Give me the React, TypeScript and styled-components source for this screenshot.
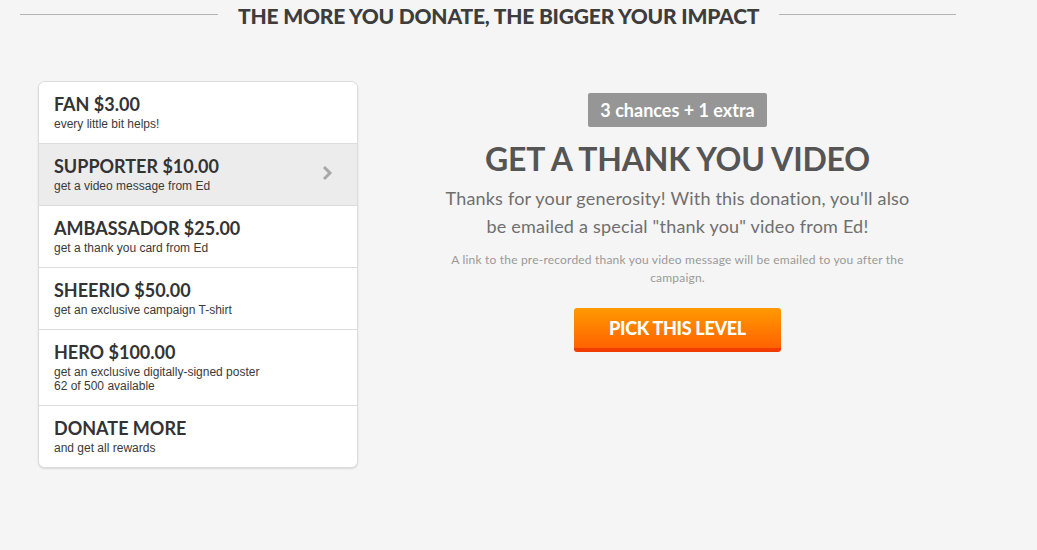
import React from "react";
import styled, { createGlobalStyle } from "styled-components";

const Global = createGlobalStyle`
  html, body { margin: 0; padding: 0; background: #f5f5f5; }
  body { font-family: Lato, "Open Sans", sans-serif; color: #444; }
`;

const Page = styled.div`
  width: 1037px;
  height: 550px;
  background: #f5f5f5;
  box-sizing: border-box;
`;

const HeaderRow = styled.div`
  display: flex;
  align-items: center;
  height: 30px;
  padding-left: 20px;
  gap: 20px;
`;

const Rule = styled.div<{ $w: number }>`
  width: ${(p) => p.$w}px;
  height: 1px;
  background: #b4b4b4;
  margin-top: -2px;
`;

const HeaderTitle = styled.h2`
  margin: 0;
  font-family: Lato, sans-serif;
  font-weight: 900;
  font-size: 21px;
  letter-spacing: -0.2px;
  color: #3d3d3d;
  white-space: nowrap;
`;

const Content = styled.div`
  display: flex;
  gap: 40px;
  padding-left: 38px;
  margin-top: 51px;
  align-items: flex-start;
`;

const Card = styled.div`
  width: 320px;
  box-sizing: border-box;
  background: #fff;
  border: 1px solid #dcdcdc;
  border-radius: 7px;
  box-shadow: 0 1px 2px rgba(0, 0, 0, 0.12);
  overflow: hidden;
`;

const Row = styled.div<{ $active?: boolean }>`
  display: flex;
  align-items: center;
  padding: 11px 16px 12px 15px;
  background: ${(p) => (p.$active ? "#ececec" : "#fff")};
  border-bottom: 1px solid #dcdcdc;
  &:last-child { border-bottom: none; }
`;

const RowText = styled.div`
  flex: 1;
  display: flex;
  flex-direction: column;
  gap: 2px;
`;

const RowTitle = styled.div`
  font-family: Lato, sans-serif;
  font-weight: 700;
  font-size: 18px;
  line-height: 22px;
  color: #333;
`;

const RowSub = styled.div`
  font-family: "Liberation Sans", Arial, sans-serif;
  font-size: 12px;
  line-height: 14px;
  color: #3a3a3a;
`;

const Chevron = styled.svg`
  width: 12px;
  height: 16px;
  margin-right: 8px;
  margin-top: -2px;
`;

const Detail = styled.div`
  width: 559px;
  display: flex;
  flex-direction: column;
  align-items: center;
  text-align: center;
  padding-top: 12px;
`;

const Badge = styled.div`
  background: #969696;
  color: #fff;
  border-radius: 2px;
  height: 34px;
  padding: 0 12px;
  display: flex;
  align-items: center;
  font-family: Lato, sans-serif;
  font-weight: 700;
  font-size: 18px;
  box-sizing: border-box;
`;

const Heading = styled.h1`
  margin: 13px 0 0;
  font-family: Lato, sans-serif;
  font-weight: 700;
  font-size: 32px;
  line-height: 38px;
  color: #555;
  letter-spacing: -0.2px;
`;

const Lead = styled.p`
  margin: 6px 0 0;
  width: 476px;
  font-family: Lato, sans-serif;
  font-size: 18px;
  letter-spacing: 0.2px;
  line-height: 28px;
  color: #6f6f6f;
`;

const Note = styled.p`
  margin: 11px 0 0;
  width: 462px;
  font-family: Lato, sans-serif;
  font-size: 12px;
  letter-spacing: 0.2px;
  line-height: 18px;
  color: #999;
`;

const PickButton = styled.button`
  margin-top: 21px;
  width: 207px;
  height: 44px;
  border: none;
  border-bottom: 4px solid #f03c00;
  border-radius: 3px;
  background: linear-gradient(#ff9a00, #ff6200);
  color: #fff;
  font-family: Lato, sans-serif;
  font-weight: 900;
  font-size: 18px;
  letter-spacing: -0.3px;
  padding: 0;
  cursor: pointer;
`;

const levels = [
  { title: "FAN $3.00", sub: ["every little bit helps!"] },
  { title: "SUPPORTER $10.00", sub: ["get a video message from Ed"], active: true },
  { title: "AMBASSADOR $25.00", sub: ["get a thank you card from Ed"] },
  { title: "SHEERIO $50.00", sub: ["get an exclusive campaign T-shirt"] },
  {
    title: "HERO $100.00",
    sub: ["get an exclusive digitally-signed poster", "62 of 500 available"],
  },
  { title: "DONATE MORE", sub: ["and get all rewards"] },
];

export default function App() {
  return (
    <Page>
      <Global />
      <HeaderRow>
        <Rule $w={198} />
        <HeaderTitle>THE MORE YOU DONATE, THE BIGGER YOUR IMPACT</HeaderTitle>
        <Rule $w={177} />
      </HeaderRow>
      <Content>
        <Card>
          {levels.map((l) => (
            <Row key={l.title} $active={l.active}>
              <RowText>
                <RowTitle>{l.title}</RowTitle>
                <RowSub>
                  {l.sub.map((s) => (
                    <div key={s}>{s}</div>
                  ))}
                </RowSub>
              </RowText>
              {l.active && (
                <Chevron viewBox="0 0 12 16">
                  <polyline
                    points="3,2 9,8 3,14"
                    fill="none"
                    stroke="#a8a8a8"
                    strokeWidth="3"
                  />
                </Chevron>
              )}
            </Row>
          ))}
        </Card>
        <Detail>
          <Badge>3 chances + 1 extra</Badge>
          <Heading>GET A THANK YOU VIDEO</Heading>
          <Lead>
            Thanks for your generosity! With this donation, you'll also be
            emailed a special "thank you" video from Ed!
          </Lead>
          <Note>
            A link to the pre-recorded thank you video message will be emailed
            to you after the campaign.
          </Note>
          <PickButton>PICK THIS LEVEL</PickButton>
        </Detail>
      </Content>
    </Page>
  );
}
